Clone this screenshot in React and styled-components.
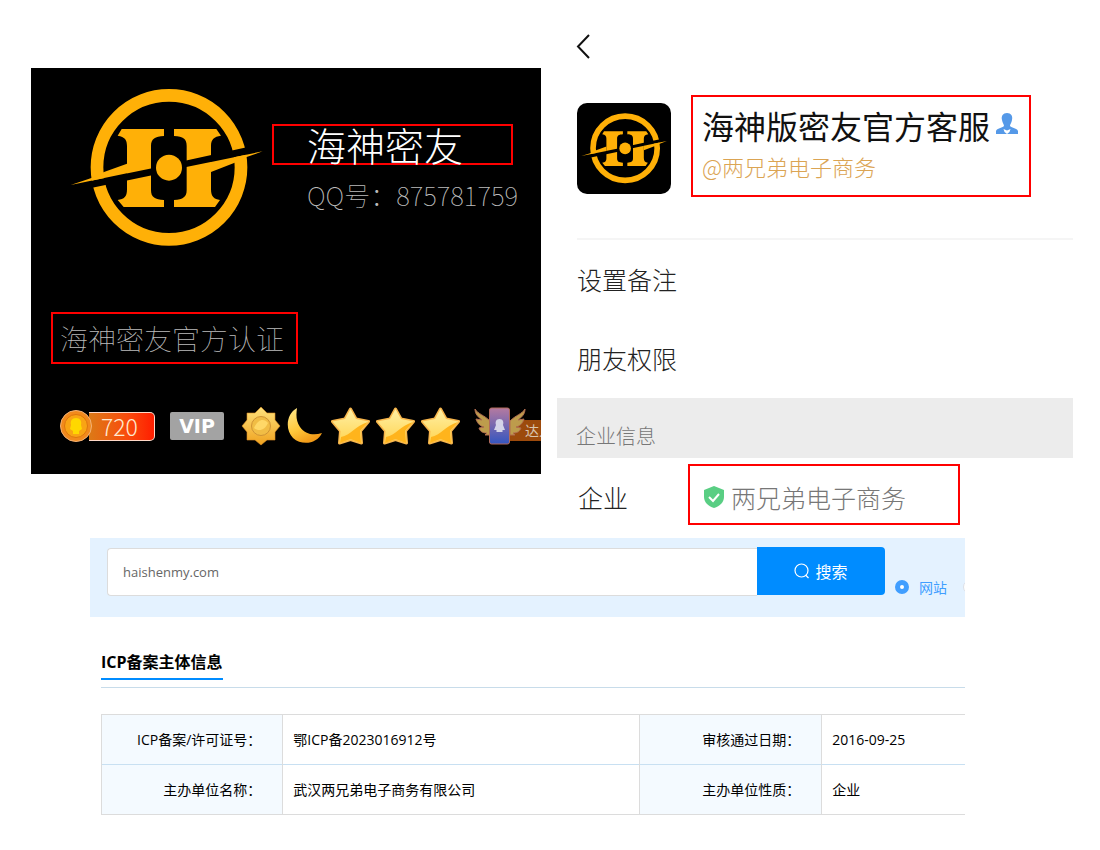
import React from "react";
import styled, { createGlobalStyle } from "styled-components";

const GlobalStyle = createGlobalStyle`
  * {
    box-sizing: border-box;
  }
  body {
    margin: 0;
    background: #fff;
    font-family: "Open Sans", "Noto Sans CJK SC", sans-serif;
  }
  h1, h2, p {
    margin: 0;
    font-weight: 300;
  }
  button {
    font-family: inherit;
    border: 0;
    padding: 0;
    cursor: pointer;
  }
  svg {
    display: block;
    flex: none;
  }
`;

const Profiles = styled.main`
  display: grid;
  grid-template-columns: 510fr 516fr;
  gap: 16px;
  align-items: start;
  padding: 0 27px 8px 31px;
  font-family: "Noto Sans CJK SC", sans-serif;
  font-weight: 300;
`;
const RedBox = styled.div`
  border: 2px solid #ff0000;
`;

// QQ card
const QQCard = styled.section`
  margin-top: 68px;
  padding: 18px 0 28px;
  background: #000;
  overflow: hidden;
`;
const QQHeader = styled.div`
  display: flex;
  gap: 9px;
  padding: 0 18px 0 39px;
`;
const QQInfo = styled.div`
  flex: 1;
  min-width: 0;
  padding-top: 38px;
`;
const NameBox = styled(RedBox)`
  height: 41px;
  margin-right: 10px;
  padding-left: 33px;
  h1 {
    font-size: 39px;
    line-height: 37px;
    color: #fff;
    white-space: nowrap;
  }
`;
const QQNumber = styled.p`
  padding: 12px 0 0 35px;
  font-size: 26px;
  line-height: 36px;
  font-weight: 100;
  color: #bbb;
  white-space: nowrap;
`;
const CertBox = styled(RedBox)`
  width: fit-content;
  margin: 63px 0 0 20px;
  padding: 0 12px 0 7px;
  p {
    font-size: 28px;
    line-height: 48px;
    font-weight: 100;
    color: #bbb;
  }
`;
const Badges = styled.div`
  display: flex;
  align-items: center;
  height: 40px;
  margin-top: 42px;
  padding-left: 29px;
  > * {
    flex: none;
  }
`;
const Level = styled.div`
  display: flex;
  align-items: center;
  margin-right: 15px;
  span {
    width: 66px;
    height: 29px;
    margin-left: -4px;
    padding-left: 12px;
    border: 1px solid #ffd9c8;
    border-left: 0;
    border-radius: 0 5px 5px 0;
    background: linear-gradient(90deg, #dc7a16, #fa4a0c 60%, #ff1e00);
    color: #ffe9cf;
    font-size: 23px;
    line-height: 27px;
  }
`;
const Vip = styled.span`
  width: 54px;
  height: 28px;
  margin-right: 17px;
  border-radius: 2px;
  background: #a3a3a3;
  color: #fff;
  font: bold 19px/28px "DejaVu Sans", sans-serif;
  text-align: center;
`;
const Ranks = styled.div`
  display: flex;
  align-items: center;
  gap: 6px;
  svg:nth-child(2) {
    margin-right: 2px;
  }
`;
const Wings = styled.div`
  display: flex;
  align-items: center;
  margin-left: 14px;
  span {
    width: 40px;
    height: 21px;
    margin: 9px 0 0 -16px;
    padding-left: 15px;
    background: #9c4a0c;
    color: #d9c5b0;
    font-size: 14px;
    line-height: 20px;
    font-weight: 400;
    white-space: nowrap;
  }
  svg {
    position: relative;
  }
`;

// WeChat card
const WechatCard = styled.section`
  padding-top: 33px;
`;
const BackButton = styled.button`
  display: block;
  margin-left: 17px;
  background: none;
`;
const Contact = styled.div`
  display: flex;
  gap: 20px;
  margin: 35px 0 0 20px;
`;
const Avatar = styled.div`
  display: flex;
  align-items: center;
  justify-content: center;
  width: 94px;
  height: 91px;
  margin-top: 8px;
  border-radius: 10px;
  background: #000;
`;
const ContactBox = styled(RedBox)`
  width: 340px;
  height: 102px;
  padding: 8px 0 0 9px;
  h2 {
    display: flex;
    gap: 6px;
    font-size: 32px;
    line-height: 40px;
    font-weight: 400;
    color: #111;
    white-space: nowrap;
  }
  p {
    font-size: 22px;
    line-height: 42px;
    color: #dba453;
  }
  svg {
    margin-top: 8px;
  }
`;
const Menu = styled.div`
  margin: 41px 0 0 20px;
  border-top: 2px solid #f5f5f5;
`;
const MenuItem = styled.button`
  display: block;
  width: 100%;
  height: 79px;
  padding-bottom: 2px;
  background: none;
  text-align: left;
  font-size: 25px;
  font-weight: 300;
  color: #222;
`;
const GroupTitle = styled.h2`
  height: 60px;
  padding: 17px 19px 0;
  background: #ececec;
  font-size: 20px;
  line-height: 42px;
  color: #777;
`;
const Company = styled.div`
  display: flex;
  gap: 60px;
  padding: 6px 0 0 21px;
  font-size: 25px;
  line-height: 66px;
  color: #222;
`;
const CompanyBox = styled(RedBox)`
  display: flex;
  align-items: center;
  gap: 7px;
  width: 272px;
  height: 61px;
  padding: 4px 0 0 14px;
  color: #777;
`;

// ICP lookup
const Lookup = styled.section`
  margin: 0 135px 0 90px;
  overflow: hidden;
`;
const SearchBar = styled.form`
  display: flex;
  height: 79px;
  padding: 9px 0 0 17px;
  background: #e4f2ff;
  overflow: hidden;
`;
const SearchInput = styled.input`
  flex: 1;
  min-width: 0;
  height: 48px;
  margin-top: 1px;
  padding: 0 15px;
  border: 1px solid #dcdcdc;
  border-right: 0;
  border-radius: 4px 0 0 4px;
  background: #fff;
  color: #666;
  font: 13px "Open Sans", sans-serif;
  outline: none;
`;
const SearchButton = styled.button`
  display: flex;
  align-items: center;
  justify-content: center;
  gap: 5px;
  width: 128px;
  height: 48px;
  border-radius: 0 4px 4px 0;
  background: #008cff;
  color: #fff;
  font-size: 16px;
`;
const Options = styled.div`
  display: flex;
  gap: 16px;
  width: 80px;
  padding: 29px 0 0 10px;
`;
const Option = styled.label`
  display: flex;
  flex: none;
  align-items: center;
  gap: 10px;
  height: 22px;
  font-size: 14px;
  color: #409eff;
  input {
    appearance: none;
    width: 14px;
    height: 14px;
    margin: 0;
    border: 1px solid #dcdfe6;
    border-radius: 50%;
    background: #fff;
  }
  input:checked {
    border: 5px solid #409eff;
  }
`;
const Info = styled.div`
  padding: 31px 0 0 11px;
`;
const InfoTitle = styled.div`
  height: 40px;
  border-bottom: 1px solid #c8dcea;
  h2 {
    width: fit-content;
    height: 32px;
    border-bottom: 2px solid #008cff;
    font-size: 16px;
    line-height: 28px;
    font-weight: bold;
    color: #000;
  }
`;
const Table = styled.table`
  width: 100%;
  margin-top: 26px;
  border-collapse: collapse;
  table-layout: fixed;
  border: 1px solid #dcdcdc;
  border-right: 0;
  font-size: 14px;
  line-height: 18px;
  color: #000;
  tr + tr th,
  tr + tr td {
    border-top: 1px solid #c8e0f2;
  }
  th,
  td {
    height: 50px;
    padding: 0 10px;
    border-left: 1px solid #dcdcdc;
    text-align: left;
    font-weight: 400;
    white-space: nowrap;
  }
  th {
    padding-right: 21px;
    background: #f4faff;
    text-align: right;
  }
`;

const records = [
  ["ICP备案/许可证号：", "鄂ICP备2023016912号", "审核通过日期：", "2016-09-25"],
  ["主办单位名称：", "武汉两兄弟电子商务有限公司", "主办单位性质：", "企业"],
];

function Logo({ width }) {
  return (
    <svg width={width} viewBox="120 60 579 489" fill="#ffb007">
      <circle
        cx="417"
        cy="304"
        r="216"
        fill="none"
        stroke="#ffb007"
        strokeWidth="38"
      />
      <path d="M275 189H402V210C375 212 363 218 363 240V372C363 395 375 400 402 402V423H281L263 402C283 400 291 392 291 370V240C291 222 285 212 263 209Z" />
      <path d="M432 189H559L573 209C552 212 543 220 543 240V370C543 392 552 400 570 402L555 423H432V402C460 400 470 393 470 372V240C470 218 460 212 432 210Z" />
      <path
        fill="#000"
        d="M122 357L370 306V327L122 379ZM465 304L698 256V233L465 284Z"
      />
      <path d="M122 357L182 337L222 318L291 293V322ZM698 256L650 273L614 290L543 318V288Z" />
      <circle cx="417" cy="305" r="39" />
    </svg>
  );
}

function Coin() {
  return (
    <svg
      width="33"
      height="34"
      viewBox="0 0 33 34"
      style={{ position: "relative" }}
    >
      <circle cx="16" cy="17" r="15.5" fill="#f28a1c" stroke="#f3b278" />
      <circle cx="16" cy="17" r="11.5" fill="#f9a414" stroke="#df750d" />
      <path
        d="M16 9C20 9 22 12 21 16L22 20L19 22V25H13V22L10 20L11 16C10 12 12 9 16 9Z"
        fill="#ffd800"
      />
    </svg>
  );
}

function Sun() {
  return (
    <svg width="40" height="40" viewBox="0 0 40 40">
      <defs>
        <linearGradient id="sun" x1="0" y1="0" x2="0" y2="1">
          <stop offset="0" stopColor="#ffe27c" />
          <stop offset="1" stopColor="#efa21f" />
        </linearGradient>
      </defs>
      <path
        d="M20 1L26 7H34V14L39 20L34 26V34H26L20 39L14 34H6V26L1 20L6 14V7H14Z"
        fill="url(#sun)"
        stroke="#d98b24"
        strokeWidth=".6"
      />
      <circle cx="20" cy="20" r="9.5" fill="#f1bd45" stroke="#cf9334" />
      <path d="M13 22C17 13 23 12 27 17C24 24 18 26 13 22Z" fill="#ffd867" />
    </svg>
  );
}

function Moon() {
  return (
    <svg width="36" height="38" viewBox="0 0 36 38">
      <defs>
        <linearGradient id="moon" x1="0" y1="0" x2=".5" y2="1">
          <stop offset="0" stopColor="#ffe98e" />
          <stop offset=".6" stopColor="#ffc83c" />
          <stop offset="1" stopColor="#f29b18" />
        </linearGradient>
      </defs>
      <path
        d="M10 1C-1 7-2 23 6 31C15 39 30 37 35 26C26 29 18 27 13 20C9 14 9 8 10 1Z"
        fill="url(#moon)"
      />
    </svg>
  );
}

function Star() {
  return (
    <svg width="39" height="38" viewBox="0 0 39 38">
      <defs>
        <linearGradient id="star" x1="0" y1="0" x2="0" y2="1">
          <stop offset="0" stopColor="#fff0a4" />
          <stop offset="1" stopColor="#ffd452" />
        </linearGradient>
      </defs>
      <path
        d="M19.500 2L25 12L37.500 14.500L29.500 24L30.500 36L19.500 32.500L8.500 36L9.500 24L1.500 14.500L14 12Z"
        fill="url(#star)"
        stroke="#f8b64c"
        strokeWidth="3"
        strokeLinejoin="round"
      />
      <path
        d="M19.500 2L25 12L37.500 14.500L29.500 24L30.500 36L19.500 32.500L8.500 36L9.500 24L1.500 14.500L14 12Z"
        fill="url(#star)"
      />
      <path
        d="M37 15L29 24L30 36L19.500 32L9 36L10 30C20 28 24 19 37 15Z"
        fill="#ffb41c"
      />
    </svg>
  );
}

function WingPhone() {
  return (
    <svg width="52" height="38" viewBox="0 0 52 38">
      <defs>
        <linearGradient id="phone" x1="0" y1="0" x2="0" y2="1">
          <stop offset="0" stopColor="#b57aa0" />
          <stop offset="1" stopColor="#3355c0" />
        </linearGradient>
      </defs>
      <path
        d="M1 2C4 7 10 8 16 14V28H11L13 26C8 26 6 24 5 21L10 20C5 19 3 15 2 12L8 13C4 10 1 7 1 2ZM51 2C48 7 42 8 36 14V28H41L39 26C44 26 46 24 47 21L42 20C47 19 49 15 50 12L44 13C48 10 51 7 51 2Z"
        fill="#bd9c4c"
        stroke="#b06c50"
      />
      <rect
        x="15.500"
        y="1"
        width="20"
        height="36"
        rx="2"
        fill="url(#phone)"
        stroke="#b06a5c"
      />
      <path
        d="M25.500 12C29 12 30 15 29 18L31 23L28.500 23V25H22.500V23L20 23L22 18C21 15 22 12 25.500 12Z"
        fill="#d4d4e8"
      />
    </svg>
  );
}

function Home() {
  return (
    <>
      <GlobalStyle />
      <Profiles>
        <QQCard>
          <QQHeader>
            <Logo width="193" />
            <QQInfo>
              <NameBox>
                <h1>海神密友</h1>
              </NameBox>
              <QQNumber>QQ号：875781759</QQNumber>
            </QQInfo>
          </QQHeader>
          <CertBox>
            <p>海神密友官方认证</p>
          </CertBox>
          <Badges>
            <Level>
              <Coin />
              <span>720</span>
            </Level>
            <Vip>VIP</Vip>
            <Ranks>
              <Sun />
              <Moon />
              <Star />
              <Star />
              <Star />
            </Ranks>
            <Wings>
              <WingPhone />
              <span>达人</span>
            </Wings>
          </Badges>
        </QQCard>
        <WechatCard>
          <BackButton type="button" aria-label="返回">
            <svg width="18" height="27" viewBox="0 0 18 27" fill="none">
              <path d="M15 2L4 13.500L15 25" stroke="#111" strokeWidth="2" />
            </svg>
          </BackButton>
          <Contact>
            <Avatar>
              <Logo width="86" />
            </Avatar>
            <ContactBox>
              <h2>
                海神版密友官方客服
                <svg width="22" height="22" viewBox="0 0 22 22">
                  <path
                    d="M11 0C15 0 17 3 16 7C15.500 10 14 11 14 13C16 15 21 15 22 18V21H0V18C1 15 6 15 8 13C8 11 6.500 10 6 7C5 3 7 0 11 0Z"
                    fill="#5599e8"
                  />
                  <path d="M7.500 16L11 17.500L14.500 16L13.500 19L11 21L8.500 19Z" fill="#fff" />
                </svg>
              </h2>
              <p>@两兄弟电子商务</p>
            </ContactBox>
          </Contact>
          <Menu>
            <MenuItem type="button">设置备注</MenuItem>
            <MenuItem type="button">朋友权限</MenuItem>
          </Menu>
          <GroupTitle>企业信息</GroupTitle>
          <Company>
            <span>企业</span>
            <CompanyBox>
              <svg width="20" height="22" viewBox="0 0 20 22" fill="none">
                <path
                  d="M10 0L20 4V11C20 16 16 20 10 22C4 20 0 16 0 11V4Z"
                  fill="#59ce83"
                />
                <path d="M5 11L9 15L15 8" stroke="#fff" strokeWidth="2" />
              </svg>
              <span>两兄弟电子商务</span>
            </CompanyBox>
          </Company>
        </WechatCard>
      </Profiles>
      <Lookup>
        <SearchBar onSubmit={(e) => e.preventDefault()}>
          <SearchInput aria-label="域名" defaultValue="haishenmy.com" />
          <SearchButton type="submit">
            <svg width="16" height="16" viewBox="0 0 16 16" fill="none">
              <circle cx="7.500" cy="7.500" r="6.500" stroke="#fff" strokeWidth="1.200" />
              <path d="M11.500 12L14.500 15" stroke="#fff" strokeWidth="1.200" />
            </svg>
            搜索
          </SearchButton>
          <Options>
            <Option>
              <input type="radio" name="kind" defaultChecked />
              网站
            </Option>
            <Option>
              <input type="radio" name="kind" aria-label="APP" />
            </Option>
          </Options>
        </SearchBar>
        <Info>
          <InfoTitle>
            <h2>ICP备案主体信息</h2>
          </InfoTitle>
          <Table>
            <colgroup>
              <col width="21%" />
              <col width="41.300%" />
              <col width="21.100%" />
              <col />
            </colgroup>
            <tbody>
              {records.map((r) => (
                <tr key={r[0]}>
                  <th scope="row">{r[0]}</th>
                  <td>{r[1]}</td>
                  <th scope="row">{r[2]}</th>
                  <td>{r[3]}</td>
                </tr>
              ))}
            </tbody>
          </Table>
        </Info>
      </Lookup>
    </>
  );
}

export default Home;
